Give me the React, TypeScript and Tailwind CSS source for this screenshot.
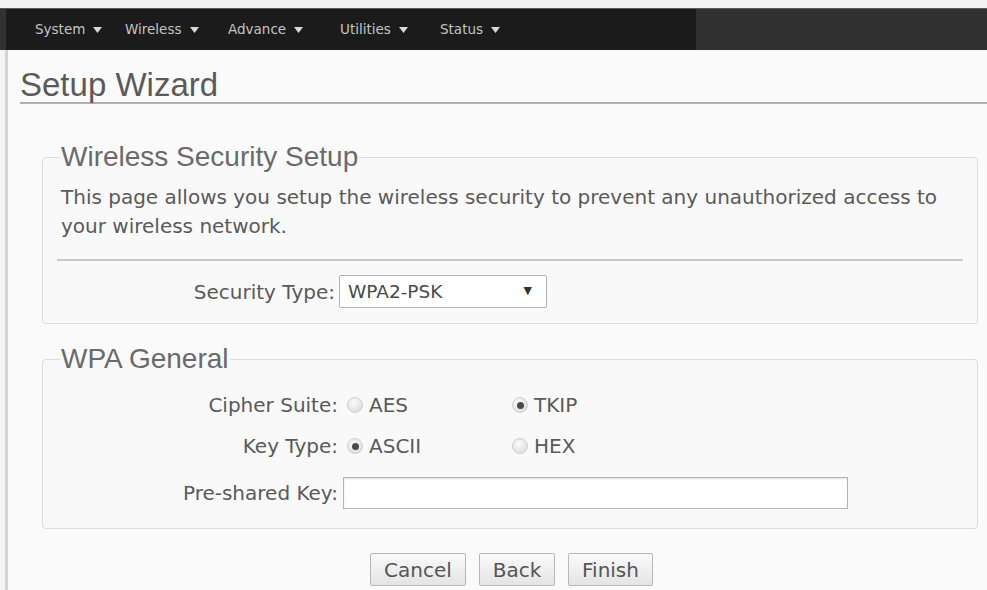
import React from "react";

const navItems = [
  { n: "System", w: "w-[90px]" },
  { n: "Wireless", w: "w-[103px]" },
  { n: "Advance", w: "w-[112px]" },
  { n: "Utilities", w: "w-[100px]" },
  { n: "Status", w: "w-[90px]" },
];

function Caret() {
  return (
    <svg width="9" height="6" viewBox="0 0 9 6" className="ml-[8px] mt-[1px]">
      <path d="M0 0 L9 0 L4.5 6 Z" fill="#d8d8d8" />
    </svg>
  );
}

function Radio({ checked }: { checked?: boolean }) {
  return (
    <span className="inline-flex items-center justify-center w-[16px] h-[16px] rounded-full border border-[#cfcfcf] bg-[radial-gradient(circle_at_40%_35%,#fbfbfb,#d6d6d6)] mr-[6px]">
      {checked && <span className="w-[7px] h-[7px] rounded-full bg-[#4a4a4a]" />}
    </span>
  );
}

export default function App() {
  const body = "font-['DejaVu_Sans',Verdana,sans-serif]";
  const head = "font-['Liberation_Sans',Arial,sans-serif]";
  return (
    <div className="w-[987px] h-[590px] overflow-hidden bg-[#f4f4f4] flex flex-col">
      <div className="h-[8px] bg-[#f4f4f4]" />
      <nav className="h-[42px] bg-[#313131] border-t border-[#5a5a5a] flex">
        <div className={`ml-[6px] w-[690px] bg-[#1b1b1b] flex items-center pl-[29px] text-[13.5px] text-[#c4c4c4] ${body}`}>
          {navItems.map((it) => (
            <span key={it.n} className={`flex items-center ${it.w}`}>
              {it.n}
              <Caret />
            </span>
          ))}
        </div>
      </nav>
      <div className="flex-1 ml-[5px] border-l-[3px] border-[#d4d4d4] bg-[#fafafa] pl-[12px] pt-[18px]">
        <h1 className={`${head} text-[33px] leading-[33px] text-[#5a5a5a] border-b-2 border-[#b0b0b0] pb-[1px]`}>
          Setup Wizard
        </h1>
        <div className="pl-[22px] pr-[9px] pt-[37px]">
          <fieldset className="border border-[#dcdcdc] rounded-[4px] px-[18px] pb-[15px] bg-[#f9f9f9]">
            <legend className={`${head} text-[28px] leading-[32px] text-[#6a6a6a] px-[1px] ml-[-1px]`}>
              Wireless Security Setup
            </legend>
            <p className={`${body} text-[20px] leading-[29px] text-[#5a5a5a] mt-[10px]`}>
              This page allows you setup the wireless security to prevent any unauthorized access to your wireless network.
            </p>
            <div className="border-t-2 border-[#c8c8c8] mt-[18px] mx-[-4px]" />
            <div className={`${body} text-[20px] text-[#5a5a5a] flex items-center mt-[14px]`}>
              <span className="w-[278px] text-right pr-[4px]">Security Type:</span>
              <div className="w-[208px] h-[33px] border border-[#b5b5b5] rounded-[2px] bg-white flex items-center justify-between pl-[8px] text-[18.5px] text-[#4a4a4a]">
                <span>WPA2-PSK</span>
                <span className="text-[11px] text-[#333] mr-[14px]">▼</span>
              </div>
            </div>
          </fieldset>

          <fieldset className="border border-[#dcdcdc] rounded-[4px] px-[18px] pb-[19px] mt-[19px] bg-[#f9f9f9]">
            <legend className={`${head} text-[28px] leading-[32px] text-[#6a6a6a] px-[1px] ml-[-1px]`}>
              WPA General
            </legend>
            <div className={`${body} text-[20px] text-[#5a5a5a] flex flex-col`}>
              <div className="flex items-center h-[30px] mt-[15px]">
                <span className="w-[286px] text-right pr-[9px]">Cipher Suite:</span>
                <span className="w-[165px] flex items-center">
                  <Radio />
                  AES
                </span>
                <span className="flex items-center">
                  <Radio checked />
                  TKIP
                </span>
              </div>
              <div className="flex items-center h-[30px] mt-[11px]">
                <span className="w-[286px] text-right pr-[9px]">Key Type:</span>
                <span className="w-[165px] flex items-center">
                  <Radio checked />
                  ASCII
                </span>
                <span className="flex items-center">
                  <Radio />
                  HEX
                </span>
              </div>
              <div className="flex items-center mt-[16px]">
                <span className="w-[282px] text-right pr-[5px]">Pre-shared Key:</span>
                <div className="w-[505px] h-[32px] border border-[#b5b5b5] bg-white shadow-[inset_0_1px_2px_rgba(0,0,0,0.12)]" />
              </div>
            </div>
          </fieldset>

          <div className={`${body} flex gap-[13px] mt-[24px] ml-[328px] text-[20px] text-[#555]`}>
            <button className="w-[96px] h-[33px] border border-[#b8b8b8] rounded-[2px] bg-[linear-gradient(#fafafa,#e4e4e4)]">Cancel</button>
            <button className="w-[76px] h-[33px] border border-[#b8b8b8] rounded-[2px] bg-[linear-gradient(#fafafa,#e4e4e4)]">Back</button>
            <button className="w-[85px] h-[33px] border border-[#b8b8b8] rounded-[2px] bg-[linear-gradient(#fafafa,#e4e4e4)]">Finish</button>
          </div>
        </div>
      </div>
    </div>
  );
}
